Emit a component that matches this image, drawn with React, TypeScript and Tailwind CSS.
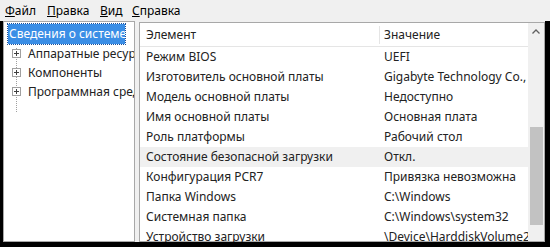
import React from "react";

const rows: [string, string][] = [
  ["Режим BIOS", "UEFI"],
  ["Изготовитель основной платы", "Gigabyte Technology Co.,"],
  ["Модель основной платы", "Недоступно"],
  ["Имя основной платы", "Основная плата"],
  ["Роль платформы", "Рабочий стол"],
  ["Состояние безопасной загрузки", "Откл."],
  ["Конфигурация PCR7", "Привязка невозможна"],
  ["Папка Windows", "C:\\Windows"],
  ["Системная папка", "C:\\Windows\\system32"],
  ["Устройство загрузки", "\\Device\\HarddiskVolume2"],
];

const treeItems = ["Аппаратные ресурсы", "Компоненты", "Программная среда"];

function PlusBox() {
  return (
    <span className="relative flex h-[9px] w-[9px] shrink-0 items-center justify-center border border-[#a0a0a0] bg-white">
      <span className="absolute h-px w-[5px] bg-[#404040]" />
      <span className="absolute h-[5px] w-px bg-[#404040]" />
    </span>
  );
}

export default function App() {
  return (
    <div
      className="flex h-[247px] w-[550px] flex-col overflow-hidden bg-[#f0f0f0] text-[12px] text-[#222]"
      style={{ fontFamily: '"Noto Sans", "Open Sans", sans-serif' }}
    >
      {/* menu */}
      <div className="flex h-[21px] shrink-0 items-center pl-[5px] text-[12px] text-black">
        <span className="w-[42px]"><u>Ф</u>айл</span>
        <span className="w-[53px]"><u>П</u>равка</span>
        <span className="w-[32px]"><u>В</u>ид</span>
        <span><u>С</u>правка</span>
      </div>

      <div className="flex min-h-0 flex-1">
        <div className="w-[3px] shrink-0 bg-black" />

        {/* tree */}
        <div className="relative w-[132px] shrink-0 overflow-hidden border border-[#a8a8a8] bg-white">
          <div className="absolute left-[12px] top-[26px] h-[64px] border-l border-dotted border-[#a0a0a0]" />
          <div className="ml-[4px] mt-[2px] flex h-[20px] w-[117px] items-center whitespace-nowrap bg-[#3a8ee6] pl-[1px] text-white outline outline-1 outline-dotted outline-[#1a4f9a]">
            Сведения о системе
          </div>
          <div className="flex flex-col">
            {treeItems.map((t) => (
              <div key={t} className="relative flex h-[19px] items-center whitespace-nowrap pl-[8px]">
                <PlusBox />
                <span className="ml-[7px]">{t}</span>
              </div>
            ))}
          </div>
        </div>

        <div className="w-[4px] shrink-0 bg-[#f0f0f0]" />

        {/* list */}
        <div className="mt-[1px] flex min-w-0 flex-1 border border-[#a8a8a8] bg-white">
          <div className="flex min-w-0 flex-1 flex-col">
            <div className="flex h-[24px] shrink-0 items-center border-b border-[#e5e5e5]">
              <div className="w-[240px] shrink-0 border-r border-[#e5e5e5] pl-[6px]">Элемент</div>
              <div className="pl-[4px]">Значение</div>
            </div>
            {rows.map(([k, v], i) => (
              <div
                key={k}
                className={`flex h-[20px] shrink-0 items-center whitespace-nowrap ${i === 5 ? "bg-[#f0f0f0]" : ""}`}
              >
                <div className="w-[240px] shrink-0 pl-[6px]">{k}</div>
                <div className="pl-[4px]">{v}</div>
              </div>
            ))}
          </div>
          {/* scrollbar */}
          <div className="flex w-[16px] shrink-0 flex-col items-center bg-[#f0f0f0]">
            <svg width="16" height="17" viewBox="0 0 16 17" className="shrink-0">
              <path d="M4.5 10.5 L8 7 L11.5 10.5" fill="none" stroke="#606060" strokeWidth="1.3" />
            </svg>
            <div className="mt-[87px] h-[98px] w-[13px] bg-[#c2c2c2]" />
          </div>
        </div>

        <div className="w-[5px] shrink-0 bg-black" />
      </div>
      <div className="h-[5px] shrink-0 bg-black" />
    </div>
  );
}
